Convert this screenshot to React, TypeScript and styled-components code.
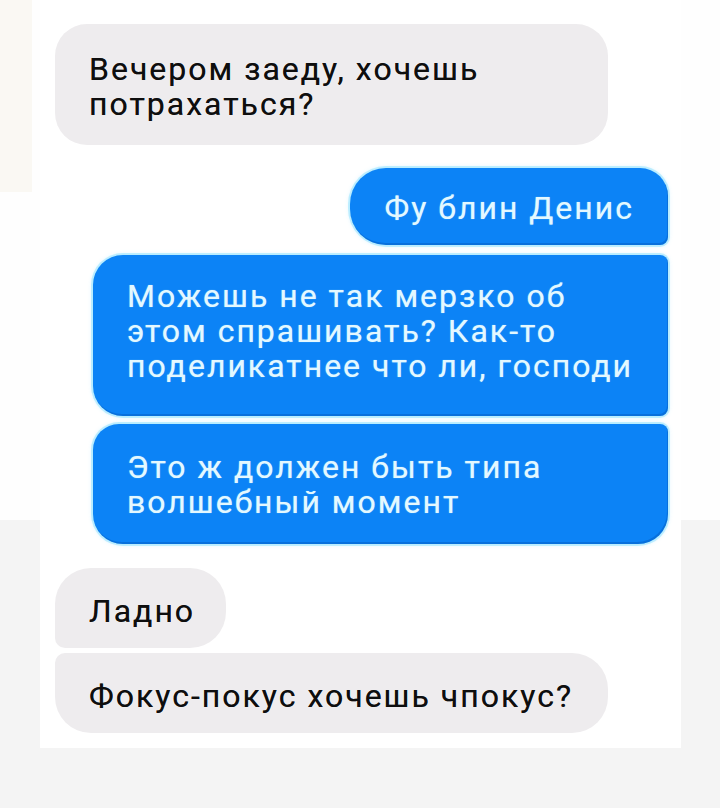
import React from "react";
import styled, { createGlobalStyle } from "styled-components";

const GlobalStyle = createGlobalStyle`
  html, body {
    margin: 0;
    padding: 0;
  }
  body {
    font-family: Roboto, "Noto Sans", sans-serif;
  }
`;

const Page = styled.div`
  width: 720px;
  height: 808px;
  overflow: hidden;
  background: linear-gradient(#faf8f3, #faf8f3) 0 0 / 32px 192px no-repeat,
    linear-gradient(to bottom, #fefefe 0, #fefefe 520px, #f4f4f4 520px);
`;

const Chat = styled.div`
  box-sizing: border-box;
  margin-left: 40px;
  width: 641px;
  height: 748px;
  background: #ffffff;
  padding: 24px 13px 0 15px;
  display: flex;
  flex-direction: column;
`;

type Side = "in" | "out";

interface BubbleProps {
  $side: Side;
  $width?: number;
  $gap: number;
  $radius: string;
  $pad: string;
}

const Bubble = styled.div<BubbleProps>`
  box-sizing: border-box;
  align-self: ${(p) => (p.$side === "in" ? "flex-start" : "flex-end")};
  width: ${(p) => (p.$width ? `${p.$width}px` : "auto")};
  margin-top: ${(p) => p.$gap}px;
  padding: ${(p) => p.$pad};
  border-radius: ${(p) => p.$radius};
  font-size: 32px;
  line-height: 35px;
  letter-spacing: 2px;
  white-space: nowrap;
  background: ${(p) => (p.$side === "in" ? "#eeecee" : "#0c83f6")};
  color: ${(p) => (p.$side === "in" ? "#0e0e0e" : "#e4f8ff")};
  box-shadow: ${(p) =>
    p.$side === "out"
      ? "inset -1px -2px 0 rgba(0, 70, 160, 0.3), 0 0 0 2px rgba(150, 228, 255, 0.55), 0 0 5px rgba(120, 215, 255, 0.45)"
      : "none"};
  text-shadow: ${(p) =>
    p.$side === "out"
      ? "0 0 1px rgba(170, 235, 255, 0.8)"
      : "0 0 0.6px rgba(0, 0, 0, 0.6)"};
`;

const App: React.FC = () => {
  return (
    <Page>
      <GlobalStyle />
      <Chat>
        <Bubble $side="in" $width={553} $gap={0} $radius="32px" $pad="28px 20px 23px 34px">
          Вечером заеду, хочешь
          <br />
          потрахаться?
        </Bubble>
        <Bubble
          $side="out"
          $gap={23}
          $radius="36px 28px 8px 36px"
          $pad="23px 34px 19px 34px"
        >
          Фу блин Денис
        </Bubble>
        <Bubble
          $side="out"
          $width={575}
          $gap={10}
          $radius="30px 8px 8px 30px"
          $pad="24px 20px 32px 34px"
        >
          Можешь не так мерзко об
          <br />
          этом спрашивать? Как-то
          <br />
          поделикатнее что ли, господи
        </Bubble>
        <Bubble
          $side="out"
          $width={575}
          $gap={8}
          $radius="26px 8px 30px 30px"
          $pad="26px 20px 24px 34px"
        >
          Это ж должен быть типа
          <br />
          волшебный момент
        </Bubble>
        <Bubble
          $side="in"
          $gap={24}
          $radius="36px 36px 36px 10px"
          $pad="26px 31px 19px 34px"
        >
          Ладно
        </Bubble>
        <Bubble
          $side="in"
          $width={553}
          $gap={5}
          $radius="10px 36px 36px 36px"
          $pad="26px 20px 19px 34px"
        >
          Фокус-покус хочешь чпокус?
        </Bubble>
      </Chat>
    </Page>
  );
};

export default App;
